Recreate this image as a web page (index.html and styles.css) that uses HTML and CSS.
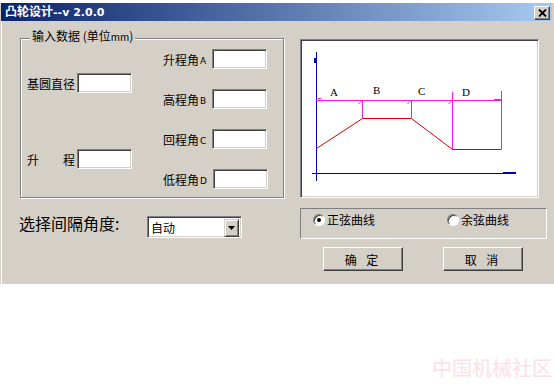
FILE: index.html
```html
<!DOCTYPE html>
<html lang="zh-CN">
<head>
<meta charset="utf-8">
<title>凸轮设计</title>
<link rel="stylesheet" href="styles.css">
</head>
<body>
<div class="topstrip"></div>
<div class="window">
  <div class="titlebar">
    <div class="title">凸轮设计<span class="ver">--v 2.0.0</span></div>
    <div class="close">
      <svg width="9" height="8" viewBox="0 0 9 8"><path d="M1 0.5 L8 7.5 M8 0.5 L1 7.5" stroke="#000" stroke-width="1.8"/></svg>
    </div>
  </div>
  <div class="main">
    <div class="group">
      <span class="legend">输入数据 (单位<span class="small">mm</span>)</span>
      <div class="group-body">
        <div class="gcol-left">
          <div class="field"><span class="lbl">基圆直径</span><input class="edit" type="text"></div>
          <div class="field"><span class="lbl lbl-spread"><span>升</span><span>程</span></span><input class="edit" type="text"></div>
        </div>
        <div class="gcol-right">
          <div class="field"><span class="lbl">升程角<span class="letter">A</span></span><input class="edit" type="text"></div>
          <div class="field"><span class="lbl">高程角<span class="letter">B</span></span><input class="edit" type="text"></div>
          <div class="field"><span class="lbl">回程角<span class="letter">C</span></span><input class="edit" type="text"></div>
          <div class="field"><span class="lbl">低程角<span class="letter">D</span></span><input class="edit" type="text"></div>
        </div>
      </div>
    </div>
    <div class="picture">
      <svg class="chart" width="235" height="155" viewBox="302 41 235 155">
        <g shape-rendering="crispEdges">
          <line x1="316.5" y1="52" x2="316.5" y2="181" stroke="#0000a8"/>
          <rect x="314" y="58" width="2" height="5" fill="#0000a8"/>
          <line x1="312" y1="173.5" x2="516" y2="173.5" stroke="#0000a8"/>
          <rect x="503" y="172" width="13" height="2" fill="#0000a8"/>
          <line x1="316" y1="100.5" x2="502" y2="100.5" stroke="#e81ee8"/>
          <line x1="362.5" y1="100" x2="362.5" y2="118" stroke="#e81ee8"/>
          <line x1="411.5" y1="100" x2="411.5" y2="118" stroke="#e81ee8"/>
          <line x1="452.5" y1="92" x2="452.5" y2="149" stroke="#e81ee8"/>
          <line x1="501.5" y1="91" x2="501.5" y2="149" stroke="#e81ee8"/>
          <rect x="494" y="99" width="7" height="1" fill="#e81ee8"/>
          <rect x="318" y="98" width="3" height="1" fill="#e81ee8"/>
        </g>
        <g stroke="#e81ee8" fill="none">
          <path d="M358.5 104 L362 100.5"/>
          <path d="M407.5 104 L411 100.5"/>
          <path d="M448.5 104 L452 100.5"/>
        </g>
        <polyline points="316.5,148.5 362.5,118.5 411.5,118.5 452.5,149.5 501.5,149.5" fill="none" stroke="#d80000"/>
        <g class="chart-label">
          <text x="330" y="96">A</text>
          <text x="373" y="94">B</text>
          <text x="418" y="95">C</text>
          <text x="462" y="96">D</text>
        </g>
      </svg>
    </div>
    <div class="interval">
      <span class="interval-label">选择间隔角度:</span>
      <div class="combo">
        <span class="combo-text">自动</span>
        <span class="combo-btn"><svg width="7" height="4" viewBox="0 0 7 4"><path d="M0 0 H7 L3.5 4 Z" fill="#000"/></svg></span>
      </div>
    </div>
    <div class="right-bottom">
      <div class="radiobox">
        <div class="radio-item first"><span class="radio checked"></span><span>正弦曲线</span></div>
        <div class="radio-item"><span class="radio"></span><span>余弦曲线</span></div>
      </div>
      <div class="buttons">
        <div class="btn">确 定</div>
        <div class="btn">取 消</div>
      </div>
    </div>
  </div>
</div>
<div class="below">
  <span class="watermark">中国机械社区</span>
</div>
</body>
</html>
```
FILE: styles.css
```css
* { box-sizing: border-box; }
html, body { margin: 0; padding: 0; }
body {
  width: 554px;
  height: 384px;
  overflow: hidden;
  background: #fff;
  font-family: "Noto Sans CJK SC", "DejaVu Sans", sans-serif;
  font-size: 12px;
  color: #000;
}
.topstrip { height: 3px; }
.window {
  height: 281px;
  background: #d4d0c8;
  box-shadow: inset 1px 0 #d4d0c8, inset 2px 0 #fff;
}
.titlebar {
  height: 18px;
  margin: 0 2px 0 1px;
  background: linear-gradient(to right, #0a246a, #a6caf0);
  display: flex;
  align-items: center;
  justify-content: space-between;
  padding: 0 2px 0 4px;
}
.title {
  color: #fff;
  font-weight: bold;
  font-size: 12px;
  line-height: 14px;
  font-family: "DejaVu Sans", "Noto Sans CJK SC", sans-serif;
}
.title .ver { font-size: 11px; }
.close {
  width: 16px;
  height: 14px;
  margin-top: 1px;
  background: #d4d0c8;
  border: 1px solid;
  border-color: #fff #404040 #404040 #fff;
  box-shadow: inset -1px -1px #808080;
  display: flex;
  align-items: center;
  justify-content: center;
}
.close svg { display: block; }
.main {
  display: grid;
  grid-template-columns: 264px 247px;
  column-gap: 16px;
  padding: 17px 0 0 20px;
  align-items: start;
}
.group {
  height: 160px;
  border: 1px solid #808080;
  box-shadow: inset 1px 1px #fff, 1px 1px #fff;
}
.legend {
  display: block;
  width: max-content;
  margin: -10px 0 0 9px;
  padding: 0 2px;
  background: #d4d0c8;
  line-height: 14px;
}
.small { font-size: 10px; }
.group-body {
  display: flex;
  justify-content: space-between;
}
.gcol-left {
  padding: 29px 0 0 6px;
  display: flex;
  flex-direction: column;
  gap: 56px;
}
.gcol-right {
  padding: 5px 15px 0 0;
  display: flex;
  flex-direction: column;
  gap: 20px;
}
.field {
  display: flex;
  align-items: center;
  height: 20px;
}
.gcol-left .lbl { width: 50px; }
.lbl-spread {
  display: flex;
  justify-content: space-between;
  padding-right: 2px;
}
.gcol-right .lbl { margin-right: 6px; }
.letter {
  font-family: "DejaVu Sans", sans-serif;
  font-size: 9px;
  margin-left: 1px;
  vertical-align: 1px;
}
.edit {
  width: 55px;
  height: 20px;
  margin: 0;
  padding: 0;
  border: 1px solid;
  border-color: #808080 #fff #fff #808080;
  box-shadow: inset 1px 1px #404040, inset -1px -1px #d4d0c8;
  background: #fff;
  font: inherit;
  outline: none;
}
.picture {
  width: 239px;
  height: 159px;
  margin-top: 1px;
  padding: 1px;
  border: 1px solid;
  border-color: #808080 #fff #fff #808080;
  box-shadow: inset 1px 1px #404040, inset -1px -1px #d4d0c8;
  background: #fff;
}
.chart { display: block; }
.chart-label {
  font-family: "Liberation Serif", serif;
  font-size: 11px;
  fill: #000;
}
.interval {
  margin: 17px 0 0 -1px;
  display: flex;
  align-items: flex-start;
}
.interval-label {
  width: 128px;
  font-size: 16px;
  line-height: 16px;
}
.combo {
  margin-top: 1px;
  width: 95px;
  height: 22px;
  padding: 2px;
  border: 1px solid;
  border-color: #808080 #fff #fff #808080;
  box-shadow: inset 1px 1px #404040, inset -1px -1px #d4d0c8;
  background: #fff;
  display: flex;
  justify-content: space-between;
}
.combo-text {
  padding-left: 1px;
  line-height: 18px;
}
.combo-btn {
  width: 15px;
  height: 18px;
  background: #d4d0c8;
  border: 1px solid;
  border-color: #d4d0c8 #404040 #404040 #d4d0c8;
  box-shadow: inset 1px 1px #fff, inset -1px -1px #808080;
  display: flex;
  align-items: center;
  justify-content: center;
}
.combo-btn svg { display: block; }
.right-bottom {
  margin-top: 10px;
  display: flex;
  flex-direction: column;
}
.radiobox {
  height: 31px;
  border: 1px solid;
  border-color: #808080 #fff #fff #808080;
  display: flex;
  align-items: flex-start;
  padding: 5px 0 0 12px;
}
.radio-item {
  display: flex;
  align-items: center;
  gap: 2px;
  line-height: 12px;
}
.radio-item.first { width: 134px; }
.radio {
  width: 12px;
  height: 12px;
  border-radius: 50%;
  border: 1px solid;
  border-color: #808080 #fff #fff #808080;
  box-shadow: inset 1px 1px #404040;
  background: #fff;
  display: flex;
  align-items: center;
  justify-content: center;
}
.radio.checked::after {
  content: "";
  width: 4px;
  height: 4px;
  border-radius: 50%;
  background: #000;
}
.buttons {
  margin-top: 8px;
  display: flex;
  gap: 40px;
  padding-left: 23px;
}
.btn {
  width: 80px;
  height: 24px;
  border: 1px solid;
  border-color: #fff #404040 #404040 #fff;
  box-shadow: inset -1px -1px #808080;
  display: flex;
  align-items: center;
  justify-content: center;
  word-spacing: 7px;
  padding-right: 3px;
}
.below {
  height: 100px;
  display: flex;
  justify-content: flex-end;
  align-items: flex-end;
  padding: 0 2px 5px 0;
}
.watermark {
  font-size: 20px;
  line-height: 22px;
  color: #fbe0e6;
}
```
